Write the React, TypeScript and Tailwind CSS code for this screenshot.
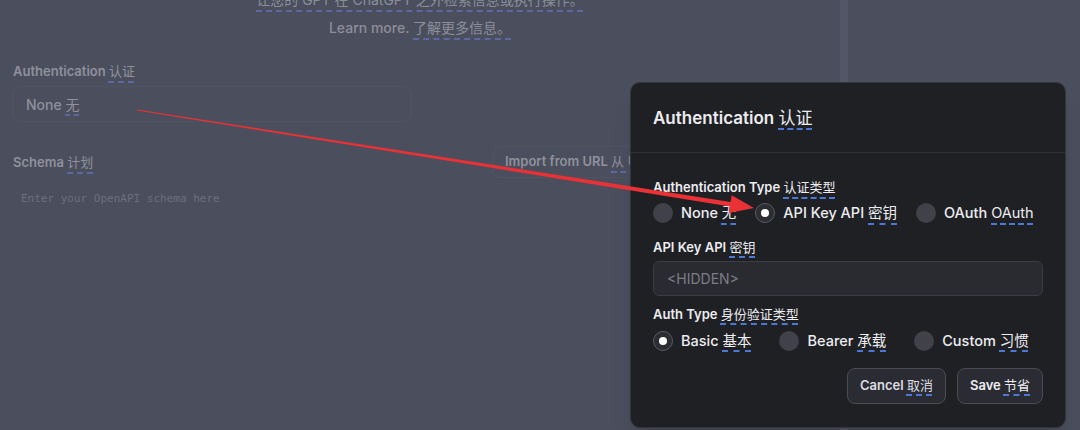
import { ReactNode } from "react";

// Chinese gloss with the dashed translation underline
const Zh = ({ children, dim }: { children: ReactNode; dim?: boolean }) => (
  <span
    className={
      "font-normal underline decoration-dashed decoration-2 underline-offset-[5px] " +
      (dim ? "decoration-[#5e68a0]" : "decoration-[#4b78d6]")
    }
  >
    {children}
  </span>
);

const Radio = ({ checked, children }: { checked?: boolean; children: ReactNode }) => (
  <label className="flex items-center gap-2 whitespace-nowrap text-[14.5px] font-medium text-[#ececf1]">
    <span
      className={
        "flex h-5 w-5 shrink-0 items-center justify-center rounded-full " +
        (checked
          ? "border border-[#5a5b63] bg-[#2c2d33]"
          : "bg-[#404149]")
      }
    >
      {checked && <span className="h-2 w-2 rounded-full bg-white" />}
    </span>
    <span>{children}</span>
  </label>
);

const AuthModal = () => {
  return (
    <div className="absolute left-[630px] top-[82px] w-[436px] h-[346px] rounded-[10px] border border-[#34353b] bg-[#1f2023] shadow-xl">
      <div className="h-[70px] flex items-center px-[22px] border-b border-[#303136]">
        <h1 className="text-[17px] font-semibold text-[#ececf1] mt-[2px]">
          Authentication <Zh>认证</Zh>
        </h1>
      </div>

      <div className="px-[22px] pt-[24px]">
        <div className="text-[13px] font-semibold text-[#ececf1] leading-[20px]">
          Authentication Type <Zh>认证类型</Zh>
        </div>
        <div className="mt-[5px] flex items-center gap-[19px]">
          <Radio>None <Zh>无</Zh></Radio>
          <Radio checked>API Key API <Zh>密钥</Zh></Radio>
          <Radio>OAuth <Zh>OAuth</Zh></Radio>
        </div>

        <div className="mt-[13px] text-[13px] font-semibold text-[#ececf1] leading-[20px]">
          API Key API <Zh>密钥</Zh>
        </div>
        <div className="mt-[4px] h-[35px] w-[390px] rounded-[6px] border border-[#3b3c44] bg-[#2a2b31] px-[13px] flex items-center text-[14px] text-[#7c7d84]">
          &lt;HIDDEN&gt;
        </div>

        <div className="mt-[8px] text-[13px] font-semibold text-[#ececf1] leading-[20px]">
          Auth Type <Zh>身份验证类型</Zh>
        </div>
        <div className="mt-[6px] flex items-center gap-[28px]">
          <Radio checked>Basic <Zh>基本</Zh></Radio>
          <Radio>Bearer <Zh>承载</Zh></Radio>
          <Radio>Custom <Zh>习惯</Zh></Radio>
        </div>

        <div className="mt-[16px] w-[390px] flex justify-end gap-[11px]">
          <button className="h-[36px] px-[12px] rounded-[8px] border border-[#4a4b55] bg-[#2b2c33] text-[13px] font-semibold text-[#dcdce2]">
            Cancel <Zh>取消</Zh>
          </button>
          <button className="h-[36px] px-[12px] rounded-[8px] border border-[#4a4b55] bg-[#2b2c33] text-[13px] font-semibold text-[#ececf1]">
            Save <Zh>节省</Zh>
          </button>
        </div>
      </div>
    </div>
  );
};

// red annotation arrow from the old select to the API key radio
const Arrow = () => (
  <svg className="absolute inset-0 pointer-events-none" width={1080} height={430}>
    <polygon
      fill="#ea3136"
      points="136.9,110.6 137.1,109.4 730.6,202.0 731.7,195.3 754,208 728.9,213.1 730.0,206.4"
    />
  </svg>
);

export default function App() {
  return (
    <div className="relative w-[1080px] h-[430px] overflow-hidden flex bg-[#4b4e5c] font-[Inter,'Noto_Sans_CJK_SC',sans-serif]">
      <div className="w-[840px] flex flex-col px-[12px]">
        <div className="-mt-[10px] flex flex-col items-center text-[14px] text-[#8b8e9a]">
          <p className="leading-[20px]">
            <Zh dim>让您的 GPT 在 ChatGPT 之外检索信息或执行操作。</Zh>
          </p>
          <p className="mt-[8px] leading-[20px] font-medium">
            Learn more. <Zh dim>了解更多信息。</Zh>
          </p>
        </div>

        <div className="mt-[23px] text-[13px] font-semibold text-[#8e919c] leading-[20px] pl-[1px]">
          Authentication <Zh dim>认证</Zh>
        </div>
        <div className="mt-[5px] h-[36px] w-[400px] rounded-[8px] border border-white/[0.03] flex items-center px-[13px] text-[14px] font-medium text-[#8e919c]">
          <span>
            None <Zh dim>无</Zh>
          </span>
        </div>

        <div className="mt-[24px] flex items-center justify-between">
          <div className="text-[13px] font-semibold text-[#8e919c] leading-[20px] pl-[1px]">
            Schema <Zh dim>计划</Zh>
          </div>
          <div className="h-[32px] w-[347px] -mr-[12px] rounded-[6px] border border-white/[0.03] flex items-center px-[11px] text-[13px] font-semibold text-[#8e919c] whitespace-nowrap">
            <span>
              Import from URL <Zh dim>从 URL 导入</Zh>
            </span>
          </div>
        </div>

        <div className="mt-[13px] pl-[9px] font-['DejaVu_Sans_Mono',monospace] text-[11px] text-[#6c6f7c]">
          Enter your OpenAPI schema here
        </div>
      </div>

      <div className="w-[8px] bg-[#535667]" />
      <div className="flex-1" />

      <AuthModal />
      <Arrow />
    </div>
  );
}
